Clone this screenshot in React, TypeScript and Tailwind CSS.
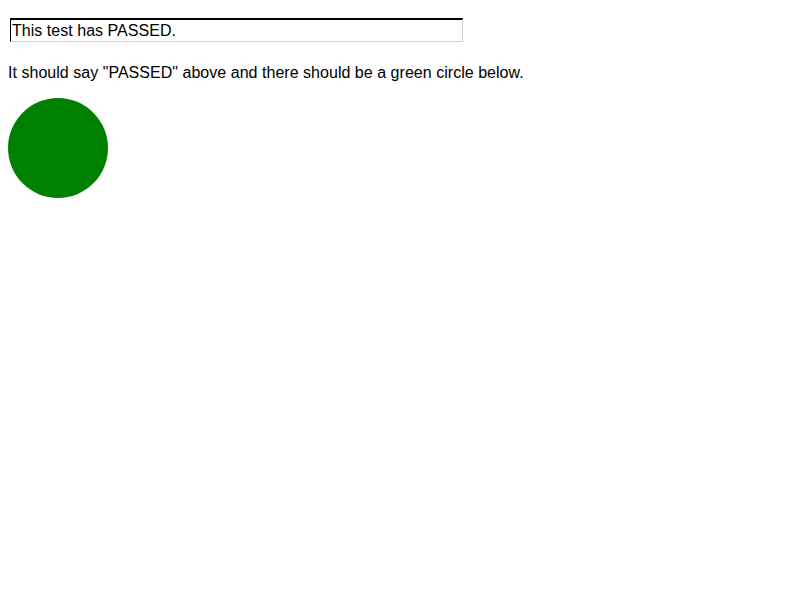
export default function App() {
  return (
    <div className="min-h-[600px] bg-white px-2 pt-[18px] text-[16px] leading-[18px] tracking-[0.03px] text-black" style={{ fontFamily: '"Liberation Sans", Arial, sans-serif' }}>
      <div className="ml-[2px] flex h-[24px] w-[453px] items-center border-t-2 border-l border-b border-r border-t-black border-l-black border-b-[#d4d0c8] border-r-[#d4d0c8] pl-[1px]">
        This test has PASSED.
      </div>
      <p className="mt-[22px]">It should say "PASSED" above and there should be a green circle below.</p>
      <div className="mt-[16px] h-[100px] w-[100px] rounded-full bg-[#008000]" />
    </div>
  );
}
